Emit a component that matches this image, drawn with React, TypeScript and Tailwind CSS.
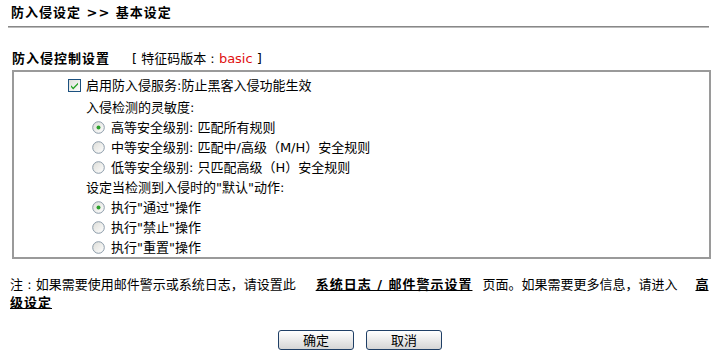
import React from 'react'

const FONT = '"DejaVu Sans", "Noto Sans CJK SC", sans-serif'

function Checkbox({ checked }: { checked: boolean }) {
  return (
    <svg width="13" height="13" viewBox="0 0 13 13" className="shrink-0">
      <defs>
        <linearGradient id="cbg" x1="0" y1="0" x2="1" y2="1">
          <stop offset="0" stopColor="#dcdcd7" />
          <stop offset="1" stopColor="#ffffff" />
        </linearGradient>
      </defs>
      <rect x="0.5" y="0.5" width="12" height="12" fill="url(#cbg)" stroke="#1c5180" />
      {checked && <path d="M3 6.2 L5.2 8.6 L10 3.8 L10 5.6 L5.2 10.4 L3 8 Z" fill="#21a121" />}
    </svg>
  )
}

function Radio({ checked }: { checked: boolean }) {
  return (
    <svg width="13" height="13" viewBox="0 0 13 13" className="shrink-0">
      <defs>
        <linearGradient id="rbg" x1="0" y1="0" x2="1" y2="1">
          <stop offset="0" stopColor="#dcdcd7" />
          <stop offset="1" stopColor="#ffffff" />
        </linearGradient>
      </defs>
      <circle cx="6.5" cy="6.5" r="5.8" fill="url(#rbg)" stroke="#8a9aa8" />
      {checked && <circle cx="6.5" cy="6.5" r="2" fill="#2ca02c" />}
    </svg>
  )
}

const SENSITIVITY = [
  { label: '高等安全级别: 匹配所有规则', checked: true },
  { label: '中等安全级别: 匹配中/高级（M/H）安全规则', checked: false },
  { label: '低等安全级别: 只匹配高级（H）安全规则', checked: false },
]

const ACTIONS = [
  { label: '执行"通过"操作', checked: true },
  { label: '执行"禁止"操作', checked: false },
  { label: '执行"重置"操作', checked: false },
]

function Button({ children }: { children: React.ReactNode }) {
  return (
    <button className="w-[76px] h-[20px] rounded-[3px] border border-[#1f3f66] bg-gradient-to-b from-white to-[#d6d6d6] text-[13px] text-black leading-none">
      {children}
    </button>
  )
}

export default function App() {
  return (
    <div className="w-[717px] h-[352px] bg-white text-black text-[13px] leading-none overflow-hidden" style={{ fontFamily: FONT }}>
      <div className="pl-[11px] pt-[6px] h-[19px] font-bold tracking-[1px]">防入侵设定 &gt;&gt; 基本设定</div>
      <div className="mx-[8px] mt-[7px] h-[2px] bg-[#888888] border-b border-[#bbbbbb]" />

      <div className="pl-[12px] mt-[24px] flex items-center h-[13px]">
        <span className="font-bold tracking-[1px]">防入侵控制设置</span>
        <span className="ml-[22px]">[ 特征码版本 : <span className="text-[#e01010]">basic</span> ]</span>
      </div>

      <div className="ml-[12px] mr-[6px] mt-[5px] h-[189px] border-2 border-[#9a9a9a] pt-[3px]">
        <div className="flex items-center h-5 pl-[54px] gap-[5px]">
          <Checkbox checked />
          <span>启用防入侵服务:防止黑客入侵功能生效</span>
        </div>
        <div className="flex items-center h-5 mt-[2px] pl-[72px]">入侵检测的灵敏度:</div>
        {SENSITIVITY.map((s) => (
          <div key={s.label} className="flex items-center h-5 pl-[78px] gap-[6px]">
            <Radio checked={s.checked} />
            <span>{s.label}</span>
          </div>
        ))}
        <div className="flex items-center h-5 pl-[72px]">设定当检测到入侵时的"默认"动作:</div>
        {ACTIONS.map((a) => (
          <div key={a.label} className="flex items-center h-5 pl-[78px] gap-[6px]">
            <Radio checked={a.checked} />
            <span>{a.label}</span>
          </div>
        ))}
      </div>

      <div className="pl-[10px] pr-[10px] mt-[17px] leading-[18px] whitespace-nowrap">
        注 : 如果需要使用邮件警示或系统日志，请设置此
        <span className="ml-[20px] mr-[10px] font-bold underline tracking-[1px]">系统日志 / 邮件警示设置</span>
        页面。如果需要更多信息，请进入
        <span className="ml-[18px] font-bold underline">高</span>
        <br />
        <span className="font-bold underline tracking-[1px]">级设定</span>
      </div>

      <div className="flex justify-center gap-[12px] mt-[18px] pl-[3px]">
        <Button>确定</Button>
        <Button>取消</Button>
      </div>
    </div>
  )
}
